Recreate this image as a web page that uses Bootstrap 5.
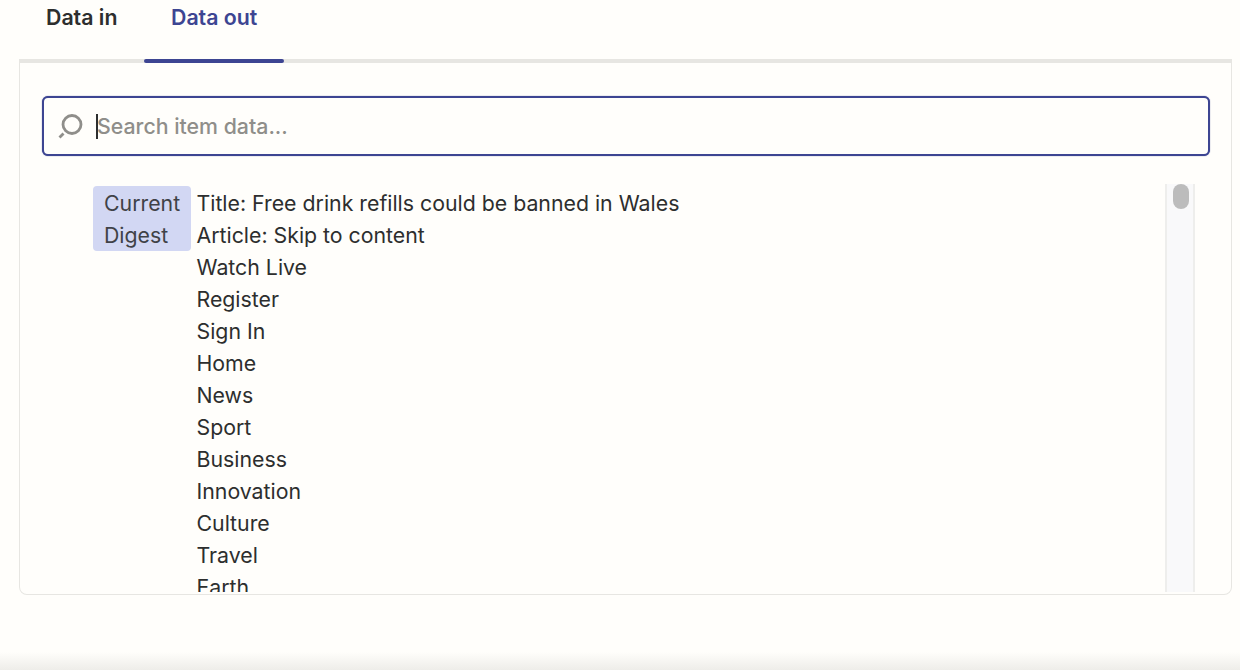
<!DOCTYPE html>
<html lang="en">
<head>
    <meta charset="UTF-8">
    <title>Data out</title>
    <link href="https://cdn.jsdelivr.net/npm/bootstrap@5.3.0/dist/css/bootstrap.min.css" rel="stylesheet">
    <style>
        html, body { height: 100%; }
        body {
            background: #fffefb;
            font-family: Inter, "Liberation Sans", sans-serif;
            color: #2d2e2e;
            overflow: hidden;
        }
        .page-wrap { height: 670px; padding: 0 8px 0 19px; position: relative; }
        .data-tabs { height: 59px; }
        .data-tab {
            width: 125px;
            padding: 4px 0 0 27px;
            font-size: 21.3px;
            line-height: 26px;
            font-weight: 600;
            color: #2d2e2e;
            text-decoration: none;
            position: relative;
        }
        .data-tab.is-active { width: 140px; color: #3d4592; }
        .data-tab.is-active::after {
            content: "";
            position: absolute;
            left: 0; right: 0; top: 59px;
            height: 4px;
            background: #3d4592;
            border-radius: 2px;
        }
        .data-panel {
            height: 536px;
            border: 1px solid #e7e6e2;
            border-top: 4px solid #e7e6e2;
            border-radius: 0 0 8px 8px;
            padding: 33px 21px 0 22px;
        }
        .search-box {
            height: 60px;
            border: 2px solid #3d4592;
            border-radius: 6px;
            padding-left: 13px;
            background: #fffefb;
            box-shadow: 0 0 1px #3d4592;
        }
        .search-caret { width: 2px; height: 25px; background: #2d2e2e; margin-left: 13px; flex: none; }
        .search-input {
            border: 0;
            outline: 0;
            background: transparent;
            flex: 1;
            padding: 2px 0 0;
            margin-left: -1px;
            font-size: 21.3px;
            font-weight: 400;
            color: #2d2e2e;
        }
        .search-input::placeholder { color: #8f8e8a; opacity: 1; font-weight: 500; }
        .result-area { height: 408px; margin-top: 28px; overflow: hidden; padding-left: 51px; }
        .key-chip {
            width: 98px;
            height: 65px;
            margin-top: 2px;
            padding: 1px 0 0 11px;
            margin-right: 6px;
            background: #d2d7f3;
            border-radius: 4px;
            color: #3f4247;
            font-size: 21.3px;
            line-height: 32px;
            flex: none;
        }
        .value-lines { flex: 1; font-size: 21.3px; line-height: 32px; padding-top: 3px; margin-left: -.5px; white-space: nowrap; }
        .scroll-track {
            width: 30px;
            height: 408px;
            margin-right: 15px;
            background: #f9f9fa;
            border-left: 2px solid #eeeeec;
            border-right: 2px solid #eeeeec;
            flex: none;
        }
        .scroll-thumb { width: 16px; height: 25px; margin: 0 0 0 6px; background: #bcbcbc; border-radius: 8px; }
        .bottom-fade {
            position: absolute;
            left: 0; right: 0; bottom: 0;
            height: 18px;
            background: linear-gradient(to bottom, #fffefb, #eeede9);
        }
    </style>
</head>
<body>

<div class="page-wrap">
    <!-- Tabs -->
    <div class="data-tabs d-flex">
        <a class="data-tab" href="#">Data in</a>
        <a class="data-tab is-active" href="#">Data out</a>
    </div>

    <!-- Panel -->
    <div class="data-panel">
        <div class="search-box d-flex align-items-center">
            <svg width="26" height="26" viewBox="0 0 26 26" fill="none" stroke="#8f8e8a">
                <circle cx="15" cy="11.5" r="9" stroke-width="2.8"/>
                <path d="M6.5 20.5 L2.5 24.5" stroke-width="2.8"/>
            </svg>
            <span class="search-caret"></span>
            <input class="search-input" type="text" placeholder="Search item data...">
        </div>

        <div class="result-area d-flex">
            <div class="key-chip">Current Digest</div>
            <div class="value-lines">
                <div>Title: Free drink refills could be banned in Wales</div>
                <div>Article: Skip to content</div>
                <div>Watch Live</div>
                <div>Register</div>
                <div>Sign In</div>
                <div>Home</div>
                <div>News</div>
                <div>Sport</div>
                <div>Business</div>
                <div>Innovation</div>
                <div>Culture</div>
                <div>Travel</div>
                <div>Earth</div>
            </div>
            <div class="scroll-track"><div class="scroll-thumb"></div></div>
        </div>
    </div>

    <div class="bottom-fade"></div>
</div>

<script src="https://cdn.jsdelivr.net/npm/bootstrap@5.3.0/dist/js/bootstrap.bundle.min.js"></script>
</body>
</html>
